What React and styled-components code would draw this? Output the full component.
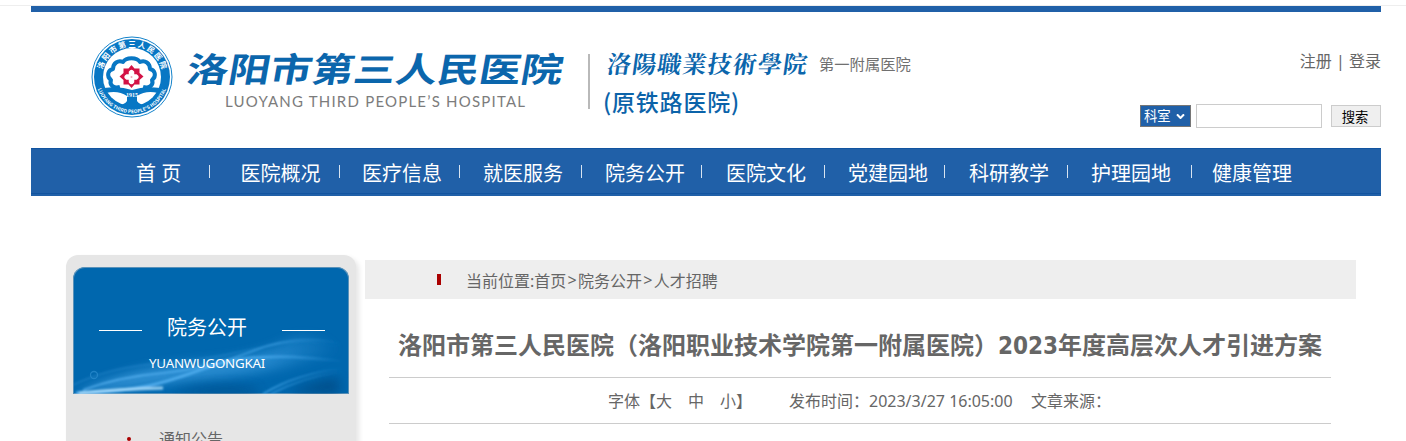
import styled, { createGlobalStyle, css } from "styled-components"
import { FaAngleDown } from "react-icons/fa"

const GlobalStyle = createGlobalStyle`
    * {
        box-sizing: border-box;
    }

    body {
        margin: 0;
        height: 441px;
        overflow: hidden;
        background-color: #fff;
        color: #666;
        font-family: "Noto Sans", "Noto Sans CJK SC", sans-serif;
        font-size: 16px;
    }
`

const Page = styled.div`
    height: 441px;
    overflow: hidden;
    padding-top: 5px;
`

const TopLine = styled.div`
    height: 1px;
    background-color: #eee;
`

const Container = styled.div`
    width: 1350px;
    margin-left: 31px;
`

const Header = styled.header`
    display: flex;
    justify-content: space-between;
    height: 142px;
    border-top: 6px solid #2060a8;
`

const Brand = styled.div`
    display: flex;
    align-items: flex-start;
    padding: 24px 0 0 60px;

    svg {
        display: block;
        flex: none;
        overflow: visible;
    }

    .name {
        margin: 12px 0 0 12px;
    }

    .divider {
        width: 2px;
        height: 55px;
        margin: 18px 0 0 20px;
        background-color: #b9b9b9;
    }
`

const Affiliation = styled.div`
    margin: 12px 0 0 15px;
    white-space: nowrap;

    .school {
        display: flex;
        height: 32px;

        span {
            margin: 6px 0 0 13px;
            font-size: 15.3px;
            line-height: 18px;
            font-family: "Noto Sans CJK SC", sans-serif;
            color: #707070;
        }
    }

    .former {
        margin: 6px 0 0 -2px;
        font-size: 23px;
        line-height: 30px;
        font-weight: 500;
        font-family: "Noto Sans CJK SC", sans-serif;
        color: #0b63a9;
        letter-spacing: 0.8px;
    }
`

const Tools = styled.div`
    display: flex;
    flex-direction: column;
    align-items: flex-end;

    .account {
        margin-top: 37px;
        line-height: 24px;
        white-space: pre;
    }
`

const SearchForm = styled.div`
    display: flex;
    align-items: center;
    margin-top: 31px;
    font-size: 13.33px;
`

const Department = styled.div`
    display: flex;
    align-items: center;
    gap: 3px;
    width: 51px;
    height: 22px;
    padding-left: 3px;
    border: 1px solid #767676;
    background-color: #2060a8;
    color: #fff;
    line-height: 20px;
    white-space: nowrap;
`

const SearchInput = styled.input`
    width: 126px;
    height: 24px;
    margin: 0 9px 0 5px;
    border: 1px solid #ccc;
    background-color: #fff;
`

const SearchButton = styled.button`
    width: 50px;
    height: 22px;
    padding: 2px 2px 0 0;
    border: 1px solid #ccc;
    background-color: #efefef;
    color: #000;
    font: inherit;
    line-height: 18px;
`

const Nav = styled.nav`
    display: flex;
    height: 48px;
    border-top: 1px solid #1154a0;
    background: linear-gradient(#1154a0, #1154a0) 0 44px / 100% 1px no-repeat
        #2060a8;
`

const NavItem = styled.a`
    display: flex;
    justify-content: space-between;
    width: ${({ $width }) => $width}px;
    padding-left: ${({ $indent }) => $indent}px;
    color: #fff;
    font-size: 20px;
    line-height: 49px;
    white-space: pre;

    ${({ $last }) =>
        !$last &&
        css`
            &::after {
                content: "";
                width: 1px;
                height: 13px;
                margin-top: 16px;
                background-color: #d8e4f1;
            }
        `}
`

const Main = styled.main`
    display: flex;
    align-items: flex-start;
    padding: 59px 25px 0 35px;
`

const Sidebar = styled.aside`
    width: 290px;
    height: 220px;
    padding: 12px 7px 0;
    border-radius: 12px 12px 0 0;
    background-color: #e6e6e6;
    box-shadow: 3px 3px 5px rgba(0, 0, 0, 0.1);
`

const Banner = styled.div`
    position: relative;
    height: 127px;
    overflow: hidden;
    border-radius: 12px 12px 0 0;
    background-color: #0067ae;
    box-shadow: inset 0 0 0 1px rgba(130, 165, 190, 0.7);
    color: #fff;
    text-align: center;

    svg {
        position: absolute;
        inset: 0;
    }
`

const BannerTitle = styled.div`
    position: relative;
    display: flex;
    align-items: center;
    padding: 46px 24px 0 26px;
    font-size: 20px;
    line-height: 30px;

    &::before,
    &::after {
        content: "";
        width: 43px;
        height: 1px;
        margin: 5px 25px 0 0;
        background-color: #fff;
    }

    &::after {
        margin: 5px 0 0 auto;
    }
`

const BannerSub = styled.div`
    position: relative;
    margin: 10px 0 0 -8px;
    font-size: 13.33px;
    line-height: 20px;
    letter-spacing: -0.25px;
`

const SideLink = styled.a`
    display: flex;
    align-items: center;
    gap: 28px;
    padding: 33px 0 0 54px;
    line-height: 24px;

    &::before {
        content: "";
        width: 4px;
        height: 4px;
        border-radius: 50%;
        background-color: #a00;
    }
`

const Article = styled.article`
    width: 991px;
    margin: 5px 0 0 9px;
`

const Breadcrumb = styled.div`
    display: flex;
    align-items: center;
    height: 39px;
    padding-left: 72px;
    background-color: #eee;

    &::before {
        content: "";
        width: 4px;
        height: 11px;
        margin-right: 25px;
        background-color: #a00;
    }

    i {
        width: 11.7px;
        font-style: normal;
        text-align: center;
    }
`

const Title = styled.h1`
    height: 79px;
    margin: 0 25px 0 24px;
    padding-top: 29px;
    border-bottom: 1px solid #ccc;
    font-family: "DejaVu Sans Condensed", "Noto Sans CJK SC", sans-serif;
    font-size: 24px;
    line-height: 36px;
    text-align: center;
    white-space: nowrap;
`

const Meta = styled.div`
    display: flex;
    height: 46px;
    margin: 0 25px 0 24px;
    padding-left: 219px;
    border-bottom: 1px solid #ccc;
    line-height: 46px;
    white-space: pre;

    .size {
        width: 181px;
    }

    .time {
        width: 242px;
    }
`

const navItems = [
    { label: "首 页", width: 179, indent: 105 },
    { label: "医院概况", width: 130, indent: 30.5 },
    { label: "医疗信息", width: 120, indent: 22 },
    { label: "就医服务", width: 122, indent: 23 },
    { label: "院务公开", width: 120, indent: 23 },
    { label: "医院文化", width: 123, indent: 24 },
    { label: "党建园地", width: 120, indent: 23 },
    { label: "科研教学", width: 123, indent: 24 },
    { label: "护理园地", width: 124, indent: 23 },
    { label: "健康管理", width: 189, indent: 20 }
]

const Emblem = () => (
    <svg width="82" height="82" viewBox="0 0 82 82">
        <defs>
            <path id="ringTop" d="M10.5 41a30.500 30.500 0 0 1 61 0" />
            <path id="ringBottom" d="M4.800 41a36.200 36.200 0 0 0 72.400 0" />
        </defs>
        <circle cx="41" cy="41" r="40" fill="#fff" stroke="#1483cb" />
        <circle cx="41" cy="41" r="38" fill="#0877c4" />
        <circle cx="41" cy="41" r="29" fill="#fff" />
        <g fill="#fff" fontFamily="Noto Sans CJK SC, sans-serif" fontWeight="700">
            <text fontSize="7.6" textAnchor="middle">
                <textPath href="#ringTop" startOffset="50%" textLength="81">
                    洛阳市第三人民医院
                </textPath>
            </text>
            <text fontSize="4.8" textAnchor="middle">
                <textPath href="#ringBottom" startOffset="50%" textLength="89">
                    LUOYANG THIRD PEOPLE'S HOSPITAL
                </textPath>
            </text>
        </g>
        <path
            d="M29 51c-6 2-11-2-9-7-5-4-3-10 2-11 0-6 5-9 10-7 3-5 14-5 17 0 5-2 10 1 10 7 5 1 7 7 2 11 2 5-3 9-9 7"
            fill="none"
            stroke="#0877c4"
            strokeWidth="4"
            strokeLinejoin="round"
        />
        <path
            d="M13 52q16-2 28 2 12-4 28-2l-2 5q-12-3-21 3v5q2 3 7 4-12 4-24 0 5-1 7-4v-5q-9-6-21-3z"
            fill="#0877c4"
        />
        <text
            x="41"
            y="61"
            fontSize="6"
            fontWeight="700"
            textAnchor="middle"
            fill="#fff"
            fontFamily="Liberation Serif, serif"
        >
            1915
        </text>
        <path
            d="M40.500 29l3 3.500h5v4.500l4 3.500-4 3.500v4.500h-5l-3 3.500-3-3.500h-5v-4.500l-4-3.500 4-3.500v-4.500h5z"
            fill="#d31245"
        />
        <path
            d="M38.500 39v-3q2-3 4 0v3h3q3 2 0 4h-3v3q-2 3-4 0v-3h-3q-3-2 0-4z"
            fill="#fff"
            stroke="#fff"
            strokeWidth="1.500"
            strokeLinejoin="round"
        />
        <circle cx="40.500" cy="41" r="1" fill="#f0a5b8" />
    </svg>
)

const Wordmark = () => (
    <svg className="name" width="383" height="64" viewBox="0 0 383 64">
        <text
            transform="translate(0 34) skewX(-10)"
            fontFamily="Noto Sans CJK SC, sans-serif"
            fontSize="34"
            fontWeight="700"
            textLength="376"
            lengthAdjust="spacingAndGlyphs"
            fill="#0b66ac"
        >
            洛阳市第三人民医院
        </text>
        <text
            x="40"
            y="59"
            fontFamily="Lato, sans-serif"
            fontSize="15"
            textLength="300"
            fill="#7c7c7c"
        >
            LUOYANG THIRD PEOPLE’S HOSPITAL
        </text>
    </svg>
)

const Calligraphy = () => (
    <svg width="201" height="32" viewBox="0 0 201 32">
        <text
            transform="translate(1 25) skewX(-8)"
            fontFamily="Noto Serif CJK SC, Noto Sans CJK TC, sans-serif"
            fontSize="24"
            fontWeight="700"
            textLength="200"
            fill="#0b66ac"
        >
            洛陽職業技術學院
        </text>
    </svg>
)

const Waves = () => (
    <svg width="276" height="127" viewBox="0 0 276 127">
        <defs>
            <linearGradient id="fade" gradientUnits="userSpaceOnUse" x2="270">
                <stop offset="0" stopColor="#6cc2ff" stopOpacity="0.8" />
                <stop offset="0.7" stopColor="#4cadf0" stopOpacity="0.7" />
                <stop offset="1" stopColor="#4cadf0" stopOpacity="0" />
            </linearGradient>
            <filter id="soft" x="-20%" y="-50%" width="140%" height="200%">
                <feGaussianBlur stdDeviation="6" />
            </filter>
            <filter id="fine" x="-20%" y="-50%" width="140%" height="200%">
                <feGaussianBlur stdDeviation="1.100" />
            </filter>
        </defs>
        <path
            d="M0 127Q60 100 120 96T210 76T268 84Q210 104 150 110T0 127"
            fill="url(#fade)"
            opacity="0.7"
            filter="url(#soft)"
        />
        <path
            d="M215 127q25-14 51-16v16zM95 127q50-12 90-4v4z"
            fill="#004a82"
            opacity="0.8"
            filter="url(#soft)"
        />
        <g fill="none" stroke="url(#fade)" filter="url(#fine)">
            <path d="M0 118C50 94 92 98 140 90S220 68 266 80" opacity="0.4" />
            <path d="M3 126C90 124 110 106 150 96S230 90 268 94" strokeWidth="3" />
            <path d="M10 123Q45 110 90 106T180 84T268 77" strokeWidth="1.500" />
            <path d="M190 127Q225 106 268 102" strokeWidth="2" />
            <path d="M198 127Q230 110 268 105" strokeWidth="1.500" />
            <path
                d="M6 126Q45 122 90 121"
                stroke="#b7e4ff"
                strokeWidth="3"
                opacity="0.8"
            />
        </g>
        <circle
            cx="21"
            cy="108"
            r="3.500"
            fill="none"
            stroke="#2c8dce"
            strokeWidth="1.300"
            opacity="0.7"
        />
    </svg>
)

const App = () => (
    <Page>
        <GlobalStyle />
        <TopLine />
        <Container>
            <Header>
                <Brand>
                    <Emblem />
                    <Wordmark />
                    <div className="divider" />
                    <Affiliation>
                        <div className="school">
                            <Calligraphy />
                            <span>第一附属医院</span>
                        </div>
                        <div className="former">(原铁路医院)</div>
                    </Affiliation>
                </Brand>
                <Tools>
                    <div className="account">注册 | 登录</div>
                    <SearchForm>
                        <Department>
                            科室
                            <FaAngleDown size={13} />
                        </Department>
                        <SearchInput />
                        <SearchButton>搜索</SearchButton>
                    </SearchForm>
                </Tools>
            </Header>

            <Nav>
                {navItems.map(({ label, width, indent }, i) => (
                    <NavItem
                        key={label}
                        $width={width}
                        $indent={indent}
                        $last={i === navItems.length - 1}
                    >
                        {label}
                    </NavItem>
                ))}
            </Nav>

            <Main>
                <Sidebar>
                    <Banner>
                        <Waves />
                        <BannerTitle>院务公开</BannerTitle>
                        <BannerSub>YUANWUGONGKAI</BannerSub>
                    </Banner>
                    <SideLink>通知公告</SideLink>
                </Sidebar>
                <Article>
                    <Breadcrumb>
                        <span>当前位置:</span>
                        <span>首页</span>
                        <i>&gt;</i>
                        <span>院务公开</span>
                        <i>&gt;</i>
                        <span>人才招聘</span>
                    </Breadcrumb>
                    <Title>
                        洛阳市第三人民医院（洛阳职业技术学院第一附属医院）2023年度高层次人才引进方案
                    </Title>
                    <Meta>
                        <span className="size">字体【大　中　小】</span>
                        <span className="time">发布时间：2023/3/27 16:05:00</span>
                        <span>文章来源：</span>
                    </Meta>
                </Article>
            </Main>
        </Container>
    </Page>
)

export default App
